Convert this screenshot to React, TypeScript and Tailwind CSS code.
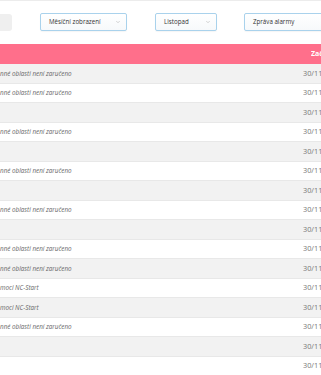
import { ChevronDown } from "lucide-react";

type Row = { text: string };

const T = "nné oblasti není zaručeno";
const N = "moci NC-Start";

const rows: Row[] = [
  { text: T },
  { text: T },
  { text: "" },
  { text: T },
  { text: "" },
  { text: T },
  { text: "" },
  { text: T },
  { text: "" },
  { text: T },
  { text: T },
  { text: N },
  { text: N },
  { text: T },
  { text: "" },
  { text: "" },
  { text: "" },
];

const Select = ({ label, width, chevron = true }: { label: string; width: string; chevron?: boolean }) => (
  <div
    className={`${width} h-[18px] shrink-0 flex items-center justify-between pl-[8px] pr-[5px] border border-[#a9d2ec] rounded-[2px] bg-gradient-to-b from-white to-[#f7f9fb] shadow-[0_1px_1px_rgba(0,0,0,0.04)]`}
  >
    <span className="text-[6.2px] text-[#333] whitespace-nowrap">{label}</span>
    {chevron && <ChevronDown className="w-[6px] h-[6px] text-[#aaa]" strokeWidth={2} />}
  </div>
);

export default function App() {
  return (
    <div
      className="w-[321px] h-[375px] overflow-hidden bg-white"
      style={{ fontFamily: '"Open Sans", "Liberation Sans", sans-serif' }}
    >
      <div className="h-[44px] flex items-start pt-[12px] border-t border-[#ececec] overflow-hidden">
        <div className="w-[12px] h-[17px] mt-[1px] shrink-0 bg-[#efefef] rounded-r-[3px]" />
        <div className="ml-[28px]">
          <Select label="Měsíční zobrazení" width="w-[87px]" />
        </div>
        <div className="ml-[28px]">
          <Select label="Listopad" width="w-[62px]" />
        </div>
        <div className="ml-[27px]">
          <Select label="Zpráva alarmy" width="w-[100px]" chevron={false} />
        </div>
      </div>

      <div className="h-[20px] bg-[#ff6f8b] flex items-center justify-end overflow-hidden">
        <span className="text-[7px] font-bold text-white whitespace-nowrap w-[10px] overflow-hidden">Začátek</span>
      </div>

      <div className="flex flex-col">
        {rows.map((row, i) => (
          <div
            key={i}
            className={`h-[19.5px] shrink-0 flex items-center border-b border-[#e8e8e8] ${
              i % 2 === 0 ? "bg-[#f2f2f2]" : "bg-white"
            }`}
          >
            <span className="flex-1 text-[6.3px] italic text-[#666] whitespace-nowrap overflow-hidden">{row.text}</span>
            <span className="w-[18px] text-[7.3px] text-[#777] whitespace-nowrap overflow-hidden">30/11/2023</span>
          </div>
        ))}
      </div>
    </div>
  );
}
